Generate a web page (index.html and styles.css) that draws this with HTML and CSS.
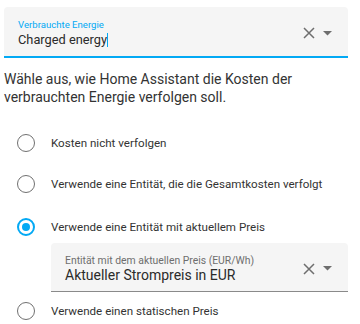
FILE: index.html
```html
<!DOCTYPE html>
<html lang="de">
<head>
<meta charset="utf-8">
<link rel="stylesheet" href="styles.css">
</head>
<body>
<div class="page">
  <div class="field focused">
    <div class="field-text">
      <div class="label">Verbrauchte Energie</div>
      <div class="value">Charged energy<span class="cursor"></span></div>
    </div>
    <div class="icons">
      <svg class="close" width="12" height="12" viewBox="0 0 12 12"><path d="M1 1L11 11M11 1L1 11" stroke="#6e6e6e" stroke-width="1.5" fill="none"/></svg>
      <svg class="arrow" width="9" height="5" viewBox="0 0 9 5"><path d="M0 0H9L4.5 4.5Z" fill="#6e6e6e"/></svg>
    </div>
  </div>

  <p class="desc">Wähle aus, wie Home Assistant die Kosten der verbrauchten Energie verfolgen soll.</p>

  <div class="options">
    <div class="option opt1"><span class="radio"></span><span class="opt-label">Kosten nicht verfolgen</span></div>
    <div class="option opt2"><span class="radio"></span><span class="opt-label">Verwende eine Entität, die die Gesamtkosten verfolgt</span></div>
    <div class="option opt3"><span class="radio checked"></span><span class="opt-label">Verwende eine Entität mit aktuellem Preis</span></div>
    <div class="field sub">
      <div class="field-text">
        <div class="label">Entität mit dem aktuellen Preis (EUR/Wh)</div>
        <div class="value">Aktueller Strompreis in EUR</div>
      </div>
      <div class="icons">
        <svg class="close" width="12" height="12" viewBox="0 0 12 12"><path d="M1 1L11 11M11 1L1 11" stroke="#6e6e6e" stroke-width="1.5" fill="none"/></svg>
        <svg class="arrow" width="9" height="5" viewBox="0 0 9 5"><path d="M0 0H9L4.5 4.5Z" fill="#6e6e6e"/></svg>
      </div>
    </div>
    <div class="option opt4"><span class="radio"></span><span class="opt-label">Verwende einen statischen Preis</span></div>
  </div>
</div>
</body>
</html>
```

FILE: styles.css
```css
* { box-sizing: border-box; }
html, body { margin: 0; padding: 0; background: #ffffff; }
body {
  font-family: Roboto, "Liberation Sans", sans-serif;
  color: #212121;
  width: 360px;
  height: 324px;
  overflow: hidden;
}
.page {
  padding: 7px 12px 0 4px;
}
.field {
  display: flex;
  align-items: center;
  background: #f5f5f5;
  border-radius: 4px 4px 0 0;
  height: 51px;
  border-bottom: 2px solid #03a9f4;
  padding: 0 16px 0 14px;
}
.field-text {
  flex: 1;
  display: flex;
  flex-direction: column;
  padding-top: 4px;
}
.label {
  font-size: 9.6px;
  line-height: 12px;
  color: #03a9f4;
}
.value {
  font-size: 12.8px;
  line-height: 17px;
  color: #2b2b2b;
  display: flex;
  align-items: center;
}
.cursor {
  display: inline-block;
  width: 1px;
  height: 14px;
  background: #03a9f4;
}
.icons {
  display: flex;
  align-items: center;
  gap: 8px;
  padding-top: 3px;
}
.close { display: block; }
.arrow { display: block; }
.desc {
  margin: 12px 0 0 0;
  font-size: 14px;
  line-height: 18px;
  color: #333333;
}
.options {
  display: flex;
  flex-direction: column;
  margin-top: 21px;
}
.option {
  display: flex;
  align-items: center;
  height: 32px;
  font-size: 11.6px;
  color: #333333;
}
.opt2 { margin-top: 9px; }
.opt3 { margin-top: 11px; }
.opt4 { margin-top: 3px; }
.radio {
  width: 18px;
  height: 18px;
  border: 1.5px solid #707070;
  border-radius: 50%;
  margin-left: 13px;
  margin-right: 16px;
  flex: none;
  position: relative;
}
.radio.checked {
  border-color: #03a9f4;
  border-width: 2px;
}
.radio.checked::after {
  content: "";
  position: absolute;
  left: 3px;
  top: 3px;
  width: 8px;
  height: 8px;
  border-radius: 50%;
  background: #03a9f4;
}
.field.sub {
  margin-left: 47px;
  height: 49px;
  border-bottom: 1px solid #8a8a8a;
}
.field.sub .label {
  color: #6e6e6e;
  font-size: 10.4px;
}
.field.sub .value {
  font-size: 14px;
}
```
